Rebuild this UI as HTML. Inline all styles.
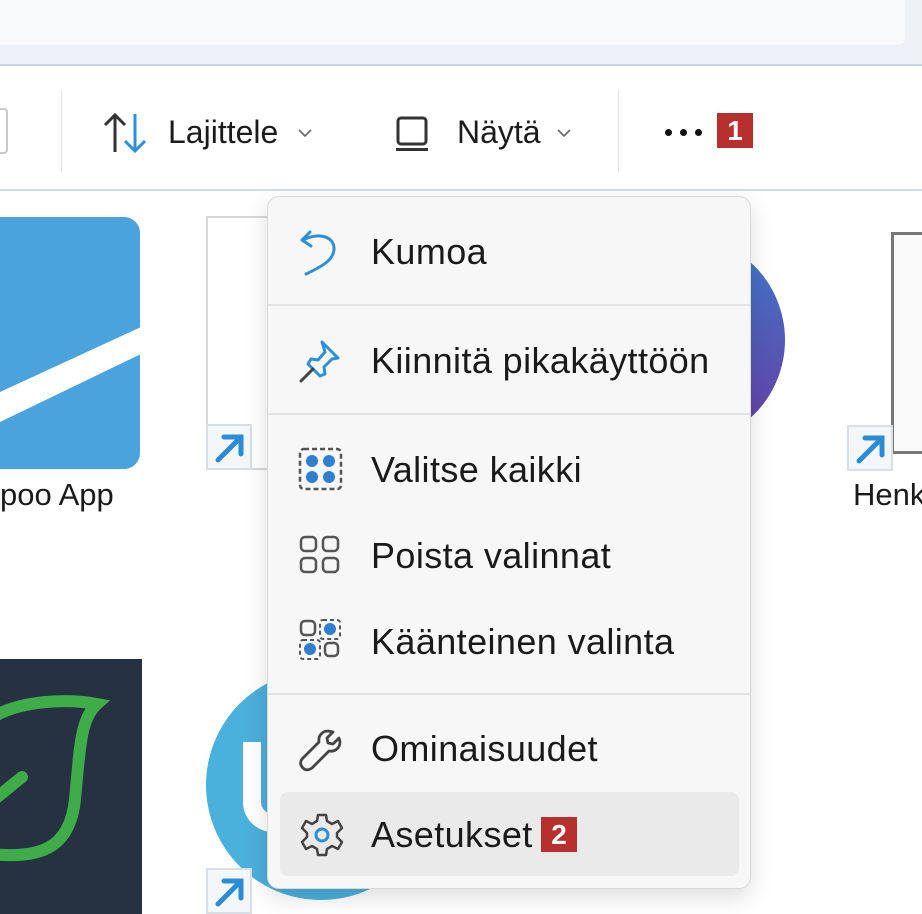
<!DOCTYPE html>
<html><head><meta charset="utf-8"><style>
*{margin:0;padding:0;box-sizing:border-box}
body{width:922px;height:914px;overflow:hidden;background:#fff;position:relative;font-family:"Segoe UI","Liberation Sans",sans-serif;color:#1b1b1b}
.abs{position:absolute}
.t{position:absolute;font-size:32px;white-space:nowrap}
.mi{position:absolute;left:371px;font-size:36px;letter-spacing:0.4px;white-space:nowrap;color:#1a1a1a}
.sep{position:absolute;left:268px;width:482px;height:2px;background:#e3e3e3}
.badge{position:absolute;background:#b8302e;color:#fff;font-weight:bold;font-size:28px;text-align:center;line-height:35px;width:36px;height:35px}
.arr{position:absolute;width:46px;height:46px;background:#f4f7fa;border:2px solid #d8dee6}
</style></head><body>
<div class="abs" style="left:0;top:0;width:922px;height:66px;background:#ecf1f5;border-bottom:2px solid #c9d6e1"></div>
<div class="abs" style="left:0;top:0;width:905px;height:45px;background:#f8f9fb;border-radius:0 0 8px 0"></div>
<div class="abs" style="left:0;top:189px;width:922px;height:2px;background:#d2dde6"></div>
<div class="abs" style="left:61px;top:90px;width:1px;height:82px;background:#e4e4e4"></div>
<div class="abs" style="left:618px;top:90px;width:1px;height:82px;background:#e4e4e4"></div>
<div class="abs" style="left:0;top:108px;width:8px;height:46px;border:2px solid #c9c9c9;border-left:none;border-radius:0 4px 4px 0"></div>
<svg class="abs" style="left:102px;top:112px" width="46" height="42" viewBox="0 0 46 42"><path d="M13 40V3M3 13L13 3L23 13" fill="none" stroke="#333" stroke-width="3"/><path d="M33 2V39M23 29L33 39L43 29" fill="none" stroke="#2b8ee0" stroke-width="3"/></svg>
<div class="t" style="left:168px;top:114px">Lajittele</div>
<svg class="abs" style="left:298px;top:128px" width="14" height="10"><path d="M1 2L7 8L13 2" fill="none" stroke="#666" stroke-width="1.6"/></svg>
<svg class="abs" style="left:393px;top:115px" width="40" height="40" viewBox="0 0 40 40"><rect x="5" y="3" width="28" height="26" rx="3" fill="none" stroke="#333" stroke-width="3"/><rect x="3" y="33" width="32" height="3" fill="#333"/></svg>
<div class="t" style="left:457px;top:114px">Näytä</div>
<svg class="abs" style="left:557px;top:128px" width="14" height="10"><path d="M1 2L7 8L13 2" fill="none" stroke="#666" stroke-width="1.6"/></svg>
<div class="abs" style="left:665px;top:129px;width:7px;height:7px;border-radius:4px;background:#111;box-shadow:15px 0 0 #111,30px 0 0 #111"></div>
<div class="badge" style="left:717px;top:113px">1</div>
<svg class="abs" style="left:0;top:217px" width="141" height="252"><rect x="-20" y="0" width="160" height="252" rx="16" fill="#4aa3dd"/><path d="M0 175L141 110V137L0 205Z" fill="#fff"/></svg>
<div class="t" style="left:0;top:477px;font-size:31px">poo App</div>
<div class="abs" style="left:206px;top:216px;width:70px;height:254px;border:2px solid #d8d8d8;background:#fff"></div>
<div class="arr" style="left:206px;top:424px"></div>
<svg class="abs" style="left:212px;top:430px" width="36" height="36"><path d="M6 30L28 8M12 7H29V24" fill="none" stroke="#2a8bd8" stroke-width="5" stroke-linecap="round"/></svg>
<div class="abs" style="left:575px;top:235px;width:210px;height:210px;border-radius:50%;background:linear-gradient(160deg,#2f8fd6,#6b3aa3)"></div>
<div class="abs" style="left:891px;top:232px;width:40px;height:222px;border:3px solid #777;background:#fafafa"></div>
<div class="arr" style="left:847px;top:425px"></div>
<svg class="abs" style="left:853px;top:431px" width="36" height="36"><path d="M6 30L28 8M12 7H29V24" fill="none" stroke="#2a8bd8" stroke-width="5" stroke-linecap="round"/></svg>
<div class="t" style="left:853px;top:477px;font-size:31px">Henk</div>
<svg class="abs" style="left:0;top:659px" width="142" height="255"><rect width="142" height="255" fill="#263241"/><path d="M-10 195C40 200 70 190 75 140C80 90 80 60 97 45C70 40 20 40 -10 60M-5 140L22 118" fill="none" stroke="#3fac4a" stroke-width="12" stroke-linecap="round"/></svg>
<div class="abs" style="left:206px;top:670px;width:230px;height:230px;border-radius:50%;background:#4ab0dc"></div>
<div class="abs" style="left:243px;top:742px;height:90px;border:18px solid #fff;border-top:none;border-radius:0 0 30px 30px;width:70px"></div>
<div class="arr" style="left:206px;top:868px"></div>
<svg class="abs" style="left:212px;top:874px" width="36" height="36"><path d="M6 30L28 8M12 7H29V24" fill="none" stroke="#2a8bd8" stroke-width="5" stroke-linecap="round"/></svg>
<div class="abs" style="left:267px;top:196px;width:484px;height:693px;background:#f7f7f7;border:1.5px solid #d9d9d9;border-radius:12px;box-shadow:0 8px 24px rgba(0,0,0,.14)"></div>
<div class="sep" style="top:304px"></div>
<div class="sep" style="top:413px"></div>
<div class="sep" style="top:693px"></div>
<div class="abs" style="left:280px;top:792px;width:459px;height:84px;background:#eaeaea;border-radius:8px"></div>
<svg class="abs" style="left:298px;top:228px" width="46" height="50" viewBox="0 0 46 50"><path d="M12 4L4 12L13 18M5 12C20 4 37 8 36 22C35 32 25 38 8 46" fill="none" stroke="#2f8fd6" stroke-width="3" stroke-linecap="round" stroke-linejoin="round"/></svg>
<div class="mi" style="top:231px">Kumoa</div>
<svg class="abs" style="left:298px;top:338px" width="46" height="46" viewBox="0 0 46 46"><path d="M24 4L40 20L34 21L26 29L27 36L22 38L10 26L13 21L20 22L27 14Z" fill="none" stroke="#2f8fd6" stroke-width="3" stroke-linejoin="round"/><path d="M15 31L3 43" stroke="#444" stroke-width="3" stroke-linecap="round"/></svg>
<div class="mi" style="top:340px">Kiinnitä pikakäyttöön</div>
<svg class="abs" style="left:298px;top:447px" width="46" height="44" viewBox="0 0 46 44"><rect x="2" y="2" width="41" height="40" rx="4" fill="none" stroke="#555" stroke-width="2.5" stroke-dasharray="5 3"/><circle cx="14" cy="14" r="6" fill="#2f7fd1"/><circle cx="31" cy="14" r="6" fill="#2f7fd1"/><circle cx="14" cy="30" r="6" fill="#2f7fd1"/><circle cx="31" cy="30" r="6" fill="#2f7fd1"/></svg>
<div class="mi" style="top:449px">Valitse kaikki</div>
<svg class="abs" style="left:298px;top:534px" width="46" height="42" viewBox="0 0 46 42"><rect x="3" y="3" width="15" height="14" rx="4" fill="none" stroke="#555" stroke-width="2.5"/><rect x="25" y="3" width="15" height="14" rx="4" fill="none" stroke="#555" stroke-width="2.5"/><rect x="3" y="24" width="15" height="14" rx="4" fill="none" stroke="#555" stroke-width="2.5"/><rect x="25" y="24" width="15" height="14" rx="4" fill="none" stroke="#555" stroke-width="2.5"/></svg>
<div class="mi" style="top:535px">Poista valinnat</div>
<svg class="abs" style="left:298px;top:618px" width="46" height="44" viewBox="0 0 46 44"><rect x="3" y="3" width="14" height="14" rx="4" fill="none" stroke="#555" stroke-width="2.5"/><rect x="22" y="2" width="20" height="19" rx="3" fill="none" stroke="#555" stroke-width="2" stroke-dasharray="4 3"/><circle cx="32" cy="11" r="6" fill="#2f7fd1"/><rect x="2" y="22" width="20" height="19" rx="3" fill="none" stroke="#555" stroke-width="2" stroke-dasharray="4 3"/><circle cx="12" cy="31" r="6" fill="#2f7fd1"/><rect x="27" y="25" width="13" height="13" rx="4" fill="none" stroke="#555" stroke-width="2.5"/></svg>
<div class="mi" style="top:621px">Käänteinen valinta</div>
<svg class="abs" style="left:298px;top:727px" width="46" height="46" viewBox="0 0 46 46"><path d="M30 4C24 4 20 9 21 15L4 32C2 35 2 38 5 41C8 44 11 43 14 41L31 24C37 25 42 21 42 15L41 11L35 17L30 16L29 11L35 5Z" fill="none" stroke="#444" stroke-width="2.8" stroke-linejoin="round"/></svg>
<div class="mi" style="top:728px">Ominaisuudet</div>
<svg class="abs" style="left:299px;top:812px" width="46" height="46" viewBox="0 0 46 46"><path d="M19 3H27L28 9L33 12L39 9L43 16L38 21V25L43 30L39 37L33 34L28 37L27 43H19L18 37L13 34L7 37L3 30L8 25V21L3 16L7 9L13 12L18 9Z" fill="none" stroke="#444" stroke-width="2.5" stroke-linejoin="round"/><circle cx="23" cy="23" r="6" fill="none" stroke="#2f8fd6" stroke-width="3"/></svg>
<div class="mi" style="top:814px">Asetukset</div>
<div class="badge" style="left:541px;top:817px">2</div>
</body></html>
